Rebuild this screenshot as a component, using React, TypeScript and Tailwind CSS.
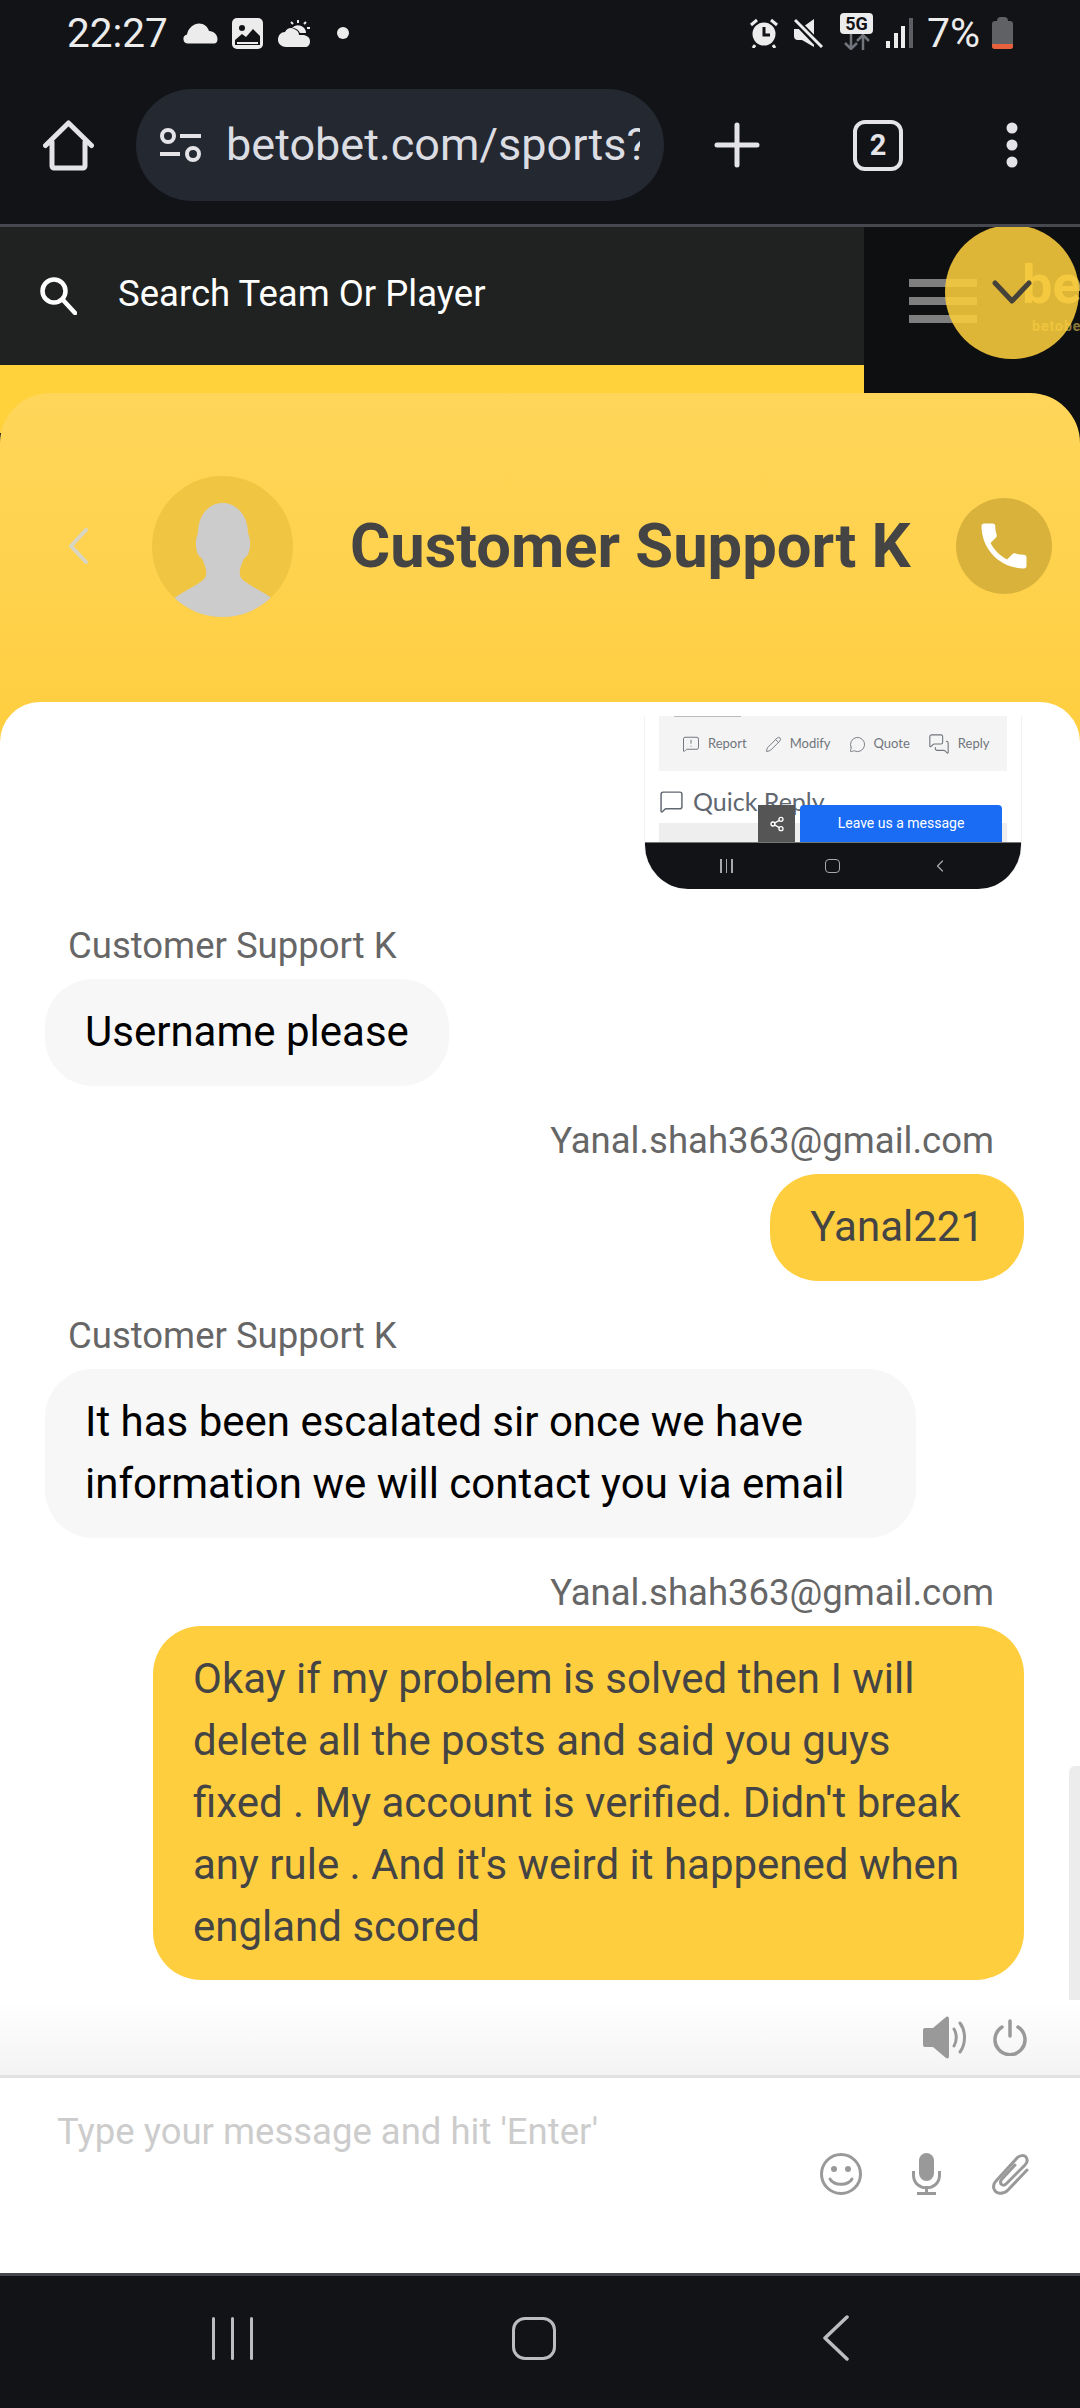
import type { ReactNode } from "react";
import { ChevronLeft, MessageSquare, MessageSquareWarning, MessageCircle, MessagesSquare, Pencil, Share2 } from "lucide-react";

function StatusBar() {
  return (
    <div className="h-[60px] flex items-center justify-between pl-[67px] pr-[67px] pt-[6px] text-[#ececec]">
      <div className="flex items-center">
        <span className="w-[100px] text-[40.5px] leading-none whitespace-nowrap">22:27</span>
        <svg className="ml-[16px]" width="35" height="21" viewBox="0 0 35 21" fill="#ececec"><path d="M5 20.5a4.5 4.5 0 0 1-1-8.9C5 5 11 .5 16 .5c5 0 9 3.5 10 7.5 5 0 8.5 4 8.5 8 0 3-1.5 4.5-3.5 4.5z" /></svg>
        <svg className="ml-[14px]" width="31" height="31" viewBox="0 0 31 31"><rect width="31" height="31" rx="5" fill="#ececec" /><circle cx="10" cy="10" r="3" fill="#121317" /><path d="M3 27v-5l7-6 4 3 7-8 7 7v9z" fill="#121317" /><path d="M5 24v2h21v-2z" fill="#ececec" /></svg>
        <svg className="ml-[15px]" width="33" height="28" viewBox="0 0 33 28" fill="#ececec"><path d="M8 28c-4 0-8-3-8-7 0-5 3-8 7-8 2-4 6-5 9-3 3 1 5 3 5 6 1 0 3 0 5 0 4 1 6 3 6 6 0 4-2 6-5 6z" /><path d="M14 9a8 8 0 0 1 14 5h-6a9 9 0 0 0-8-5z" /><path d="M20 1v3M13 3l2 2M28 3l-2 2M32 9h-3" stroke="#ececec" strokeWidth="2" /></svg>
        <span className="ml-[26px] w-[12px] h-[12px] rounded-full bg-[#ececec]" />
      </div>
      <div className="flex items-center">
        <svg width="28" height="30" viewBox="0 0 28 30" fill="none"><circle cx="14" cy="16" r="11.5" fill="#ececec" /><path d="M14 9v8h6" stroke="#121317" strokeWidth="3" /><path d="M1 7l6-5M27 7l-6-5M5 27l-2 3M23 27l2 3" stroke="#ececec" strokeWidth="3" /></svg>
        <svg className="ml-[16px]" width="29" height="30" viewBox="0 0 29 30"><path d="M0 11h6l14-10v28l-12-7H4a4 4 0 0 1-4-4z" fill="#ececec" /><path d="M0 1l27 28" stroke="#121317" strokeWidth="7" /><path d="M1 2l27 27" stroke="#ececec" strokeWidth="3" /></svg>
        <div className="ml-[17px] w-[33px] -mt-[4px] flex flex-col items-center">
          <span className="w-[33px] rounded-[4px] bg-[#ececec] text-center text-[18px] leading-[21px] font-bold text-[#121317]">5G</span>
          <svg width="26" height="16" viewBox="0 0 26 16" fill="none" stroke="#71747a" strokeWidth="2.5"><path d="M7 0v15M1 9l6 6 6-6M19 16V1M13 7l6-6 6 6" /></svg>
        </div>
        <svg className="ml-[13px]" width="27" height="30" viewBox="0 0 27 30"><rect x="0" y="23" width="4" height="7" fill="#ececec" /><rect x="8" y="15" width="4" height="15" fill="#ececec" /><rect x="15" y="8" width="4" height="22" fill="#ececec" /><rect x="23" y="0" width="4" height="30" fill="#5c5e63" /></svg>
        <span className="ml-[14px] w-[58px] text-[41px] leading-none">7%</span>
        <div className="ml-[7px] w-[21px] h-[32px] flex flex-col items-center">
          <div className="w-[11px] h-[4px] rounded-t-sm bg-[#606165]" />
          <div className="w-[21px] flex-1 rounded-[3px] bg-[#606165] flex flex-col justify-end overflow-hidden"><div className="h-[5px] bg-[#e8613c]" /></div>
        </div>
      </div>
    </div>
  );
}

function Toolbar() {
  return (
    <div className="h-[167px] flex items-center pl-[43px] pt-[6px] border-b-[3px] border-[#46474f]">
      <svg width="51" height="51" viewBox="0 0 51 51" fill="none" stroke="#e4e4e8" strokeWidth="5" strokeLinecap="round" strokeLinejoin="round"><path d="M2.5 25.5L25.5 3l23 22.5M9 22v24a2 2 0 0 0 2 2h29a2 2 0 0 0 2-2V22" /></svg>
      <div className="ml-[42px] w-[528px] h-[112px] rounded-[56px] bg-[#242831] flex items-center pl-[24px] pr-[24px]">
        <svg width="42" height="36" viewBox="0 0 42 36" fill="none" stroke="#e4e4e8" strokeWidth="4" className="shrink-0"><circle cx="8" cy="9" r="6" /><path d="M20 9h21M0 27h20" /><circle cx="33" cy="27" r="6" /></svg>
        <span className="ml-[24px] overflow-hidden whitespace-nowrap text-[45px] text-[#dcdde2]">betobet.com/sports?</span>
      </div>
      <svg className="ml-[50px]" width="46" height="46" viewBox="0 0 46 46" stroke="#e4e4e8" strokeWidth="5" strokeLinecap="round"><path d="M23 3v40M3 23h40" /></svg>
      <div className="ml-[93px] w-[50px] h-[51px] rounded-[12px] border-[4px] border-[#e4e4e8] text-[#e4e4e8] flex items-center justify-center font-bold text-[29px] leading-none">2</div>
      <svg className="ml-[103px]" width="12" height="46" viewBox="0 0 12 46" fill="#e4e4e8"><circle cx="6" cy="6" r="5.5" /><circle cx="6" cy="23" r="5.5" /><circle cx="6" cy="40" r="5.5" /></svg>
    </div>
  );
}

function SiteHeader() {
  return (
    <div className="flex h-[206px]">
      <div className="w-[864px] flex flex-col">
        <div className="h-[138px] bg-[#202221] flex items-center pl-[40px]">
          <svg width="37" height="38" viewBox="0 0 37 38" fill="none" stroke="white" strokeWidth="4.5" strokeLinecap="round"><circle cx="14" cy="14" r="11.5" /><path d="M23 23l12 13" /></svg>
          <span className="ml-[41px] pb-[3px] text-[36.5px] text-white">Search Team Or Player</span>
        </div>
        <div className="flex-1 bg-[#ffd23c]" />
      </div>
      <div className="relative flex-1 overflow-hidden bg-[#0e0f10] pl-[45px] pt-[52px]">
        <div className="w-[68px] flex flex-col gap-[10px]">
          <div className="h-[8px] bg-[#7f7f7f]" />
          <div className="h-[8px] bg-[#7f7f7f]" />
          <div className="h-[8px] bg-[#7f7f7f]" />
        </div>
        <span className="absolute left-[158px] top-[28px] text-[54px] leading-[60px] font-bold text-[#b8a050] whitespace-nowrap">be</span>
        <span className="absolute left-[168px] top-[90px] text-[14px] leading-[18px] font-bold tracking-[1px] text-[#8a7a3a] whitespace-nowrap">betobet</span>
        <div className="absolute left-[81px] -top-[2px] w-[134px] h-[134px] rounded-full bg-[#fcce3c]/88 flex items-center justify-center">
          <svg width="40" height="24" viewBox="0 0 40 24" fill="none" stroke="#45423a" strokeWidth="5" strokeLinecap="round" strokeLinejoin="round"><path d="M3 3l17 18L37 3" /></svg>
        </div>
      </div>
    </div>
  );
}

function ChatHeader() {
  return (
    <div className="h-[349px] rounded-t-[50px] bg-gradient-to-b from-[#ffd65a] to-[#ffce3f] flex items-center pb-[43px] pl-[68px] pr-[28px]">
      <svg width="20" height="36" viewBox="0 0 20 36" fill="none" stroke="#d9d5c3" strokeWidth="4" strokeLinecap="round" strokeLinejoin="round" className="shrink-0"><path d="M18 2L3 18l15 16" /></svg>
      <div className="ml-[64px] w-[141px] h-[141px] rounded-full bg-[#f0c542] overflow-hidden flex items-end justify-center shrink-0">
        <svg width="141" height="114" viewBox="0 0 141 114" fill="#cccccc"><path d="M70.5 0C84 0 96 12 96 30c3 7 3 17-1 23-3 2-4 4-6 10-2 6-2 11 2 14 8 7 28 15 35 24l-6 13H22l-6-13c7-9 27-17 35-24 4-3 4-8 2-14-2-6-3-8-6-10-4-6-4-16-1-23C46 12 57 0 70.5 0z" /></svg>
      </div>
      <h1 className="ml-[57px] text-[61.5px] font-bold text-[#444444] whitespace-nowrap">Customer Support K</h1>
      <div className="ml-auto w-[96px] h-[96px] rounded-full bg-[#d9b23c] flex items-center justify-center">
        <svg width="60" height="60" viewBox="0 0 24 24" fill="white"><path d="M6.62 10.79c1.44 2.83 3.76 5.14 6.59 6.59l2.2-2.2c.27-.27.67-.36 1.02-.24 1.12.37 2.33.57 3.57.57.55 0 1 .45 1 1V20c0 .55-.45 1-1 1-9.39 0-17-7.61-17-17 0-.55.45-1 1-1h3.5c.55 0 1 .45 1 1 0 1.25.2 2.45.57 3.57.11.35.03.74-.25 1.02l-2.2 2.2z" /></svg>
      </div>
    </div>
  );
}

function Screenshot() {
  return (
    <div className="flex justify-end pr-[58px]">
      <div className="w-[378px] h-[173px] overflow-hidden rounded-b-[44px] bg-white border-x border-[#f2f2f2] flex flex-col font-['Lato',sans-serif]">
        <div className="mx-[14px] h-[55px] bg-[#f4f4f4] flex flex-col">
          <div className="ml-[15px] w-[67px] h-[1px] bg-[#bbbbbb]" />
          <div className="flex-1 flex items-center gap-[18px] pl-[23px] text-[13px] text-[#70757c]">
            <span className="flex items-center gap-[8px]"><MessageSquareWarning size={18} strokeWidth={1.3} />Report</span>
            <span className="flex items-center gap-[8px]"><Pencil size={17} strokeWidth={1.3} />Modify</span>
            <span className="flex items-center gap-[8px]"><MessageCircle size={17} strokeWidth={1.3} />Quote</span>
            <span className="flex items-center gap-[8px]"><MessagesSquare size={22} strokeWidth={1.2} />Reply</span>
          </div>
        </div>
        <div className="relative flex-1 flex flex-col">
          <div className="ml-[14px] mt-[15px] flex items-center gap-[9px] text-[25px] leading-[30px] text-[#606770] whitespace-nowrap"><MessageSquare size={25} strokeWidth={1.4} />Quick Reply</div>
          <div className="mt-auto mx-[14px] h-[19px] bg-[#eeeeee]" />
          <div className="absolute left-[113px] bottom-0 w-[37px] h-[37px] bg-[#555555] flex items-center justify-center"><Share2 size={16} className="text-white" /></div>
          <div className="absolute left-[155px] bottom-0 w-[202px] h-[37px] bg-[#1a6cf5] rounded-t-[4px] flex items-center justify-center text-[14px] text-white font-['Roboto',sans-serif]">Leave us a message</div>
        </div>
        <div className="h-[47px] border-t border-[#777777] bg-[#121317] grid grid-cols-3 items-center px-[28px]">
          <span className="flex justify-center gap-[4px]"><i className="block w-[1.5px] h-[14px] bg-[#a9a9ab]" /><i className="block w-[1.5px] h-[14px] bg-[#a9a9ab]" /><i className="block w-[1.5px] h-[14px] bg-[#a9a9ab]" /></span>
          <span className="flex justify-center"><i className="block w-[15px] h-[14px] rounded-[4px] border-[1.5px] border-[#a9a9ab]" /></span>
          <span className="flex justify-center"><ChevronLeft size={20} strokeWidth={1.5} className="text-[#a9a9ab]" /></span>
        </div>
      </div>
    </div>
  );
}

function AgentMessage({ children, wide }: { children: ReactNode; wide?: boolean }) {
  return (
    <div className="pl-[45px]">
      <div className="pl-[23px] text-[36.5px] leading-[44px] text-[#666666]">Customer Support K</div>
      <div className={wide ? "mt-[11px] w-[871px] pl-[40px] pt-[22px] pb-[23px] rounded-[48px] bg-[#f7f7f7] text-[42px] leading-[62px] text-black" : "mt-[11px] w-fit px-[40px] pt-[22px] pb-[23px] rounded-[48px] bg-[#f7f7f7] text-[42px] leading-[62px] text-black"}>{children}</div>
    </div>
  );
}

function UserMessage({ children, wide }: { children: ReactNode; wide?: boolean }) {
  return (
    <div className="flex flex-col items-end pr-[56px]">
      <div className="pr-[30px] text-[36.5px] leading-[44px] text-[#666666]">Yanal.shah363@gmail.com</div>
      <div className={wide ? "mt-[11px] w-[871px] pl-[40px] py-[22px] rounded-[48px] bg-[#ffce3f] text-[42px] leading-[62px] text-[#444444]" : "mt-[11px] px-[40px] pt-[22px] pb-[23px] rounded-[48px] bg-[#ffce3f] text-[42px] leading-[62px] text-[#444444]"}>{children}</div>
    </div>
  );
}

function Composer() {
  return (
    <div className="h-[198px] border-t-[3px] border-[#e2e2e2] bg-white flex flex-col pl-[57px] pr-[51px] pt-[32px]">
      <span className="text-[36.5px] leading-[44px] text-[#cccccc]">Type your message and hit 'Enter'</span>
      <div className="-mt-px flex items-center justify-end gap-[50px]">
        <svg width="42" height="42" viewBox="0 0 42 42" fill="none" stroke="#999999" strokeWidth="3"><circle cx="21" cy="21" r="19.5" /><circle cx="14" cy="16" r="3" fill="#999999" stroke="none" /><circle cx="28" cy="16" r="3" fill="#999999" stroke="none" /><path d="M10 26c4 7 18 7 22 0" strokeLinecap="round" /></svg>
        <svg width="29" height="42" viewBox="0 0 29 42" fill="none" stroke="#999999" strokeWidth="3"><rect x="7" y="0" width="15" height="28" rx="7.5" fill="#999999" stroke="none" /><path d="M1.5 18v4c0 17 26 17 26 0v-4" /><path d="M14.5 33v7M5 40.5h19" /></svg>
        <svg width="38" height="42" viewBox="0 0 38 42" fill="none" stroke="#999999" strokeWidth="3" strokeLinecap="round" strokeLinejoin="round"><path d="M36 17L17 37c-5 5-12 4-14-1-1-3 0-6 2-8L26 5c3-3 7-3 9-1 2 3 1 6-1 8L15 31c-2 2-4 1-5 0-1-2-1-3 1-5l13-14" /></svg>
      </div>
    </div>
  );
}

function NavBar() {
  return (
    <div className="h-[135px] border-t-[3px] border-[#46474f] bg-[#121317] grid grid-cols-[302px_302px_302px] items-center pb-[8px] pl-[81px]">
      <div className="flex justify-center gap-[16px]">
        <span className="w-[3px] h-[43px] rounded-full bg-[#bdbdbf]" />
        <span className="w-[3px] h-[43px] rounded-full bg-[#bdbdbf]" />
        <span className="w-[3px] h-[43px] rounded-full bg-[#bdbdbf]" />
      </div>
      <div className="flex justify-center">
        <span className="w-[44px] h-[43px] rounded-[13px] border-[3.5px] border-[#bdbdbf]" />
      </div>
      <div className="flex justify-center">
        <svg width="26" height="46" viewBox="0 0 26 46" fill="none" stroke="#bdbdbf" strokeWidth="3.5" strokeLinecap="round" strokeLinejoin="round"><path d="M24 2L2 23l22 21" /></svg>
      </div>
    </div>
  );
}

export default function App() {
  return (
    <div className="w-[1080px] h-[2408px] overflow-hidden bg-[#121317] font-['Roboto',sans-serif]">
      <StatusBar />
      <Toolbar />
      <SiteHeader />
      <div className="relative -mt-[40px]">
        <ChatHeader />
        <div className="relative -mt-[40px] h-[1373px] bg-white rounded-t-[40px] flex flex-col pt-[14px] overflow-hidden">
          <Screenshot />
          <div className="mt-[35px] flex flex-col gap-[33px]">
            <AgentMessage>Username please</AgentMessage>
            <UserMessage>Yanal221</UserMessage>
            <AgentMessage wide>It has been escalated sir once we have<br />information we will contact you via email</AgentMessage>
            <UserMessage wide>Okay if my problem is solved then I will<br />delete all the posts and said you guys<br />fixed . My account is verified. Didn't break<br />any rule . And it's weird it happened when<br />england scored</UserMessage>
          </div>
          <div className="absolute right-0 top-[1064px] w-[11px] h-[234px] rounded-tl-[6px] bg-[#ececec]" />
          <div className="absolute left-0 right-0 bottom-0 h-[75px] bg-gradient-to-b from-white to-[#f3f3f3] flex items-center justify-end pr-[53px]">
            <svg width="45" height="43" viewBox="0 0 45 43" fill="#999999"><path d="M0 14a2 2 0 0 1 2-2h8L23 1c2-1 3 0 3 2v37c0 2-1 3-3 2L10 31H2a2 2 0 0 1-2-2z" /><path d="M31 13c3 5 3 12 0 17M37 7c6 8 6 21 0 29" fill="none" stroke="#999999" strokeWidth="3" strokeLinecap="round" /></svg>
            <svg className="ml-[25px]" width="34" height="37" viewBox="0 0 34 37" fill="none" stroke="#999999" strokeWidth="3.5" strokeLinecap="round"><path d="M17 2v15M9 8a15 15 0 1 0 16 0" /></svg>
          </div>
        </div>
        <Composer />
      </div>
      <NavBar />
    </div>
  );
}
